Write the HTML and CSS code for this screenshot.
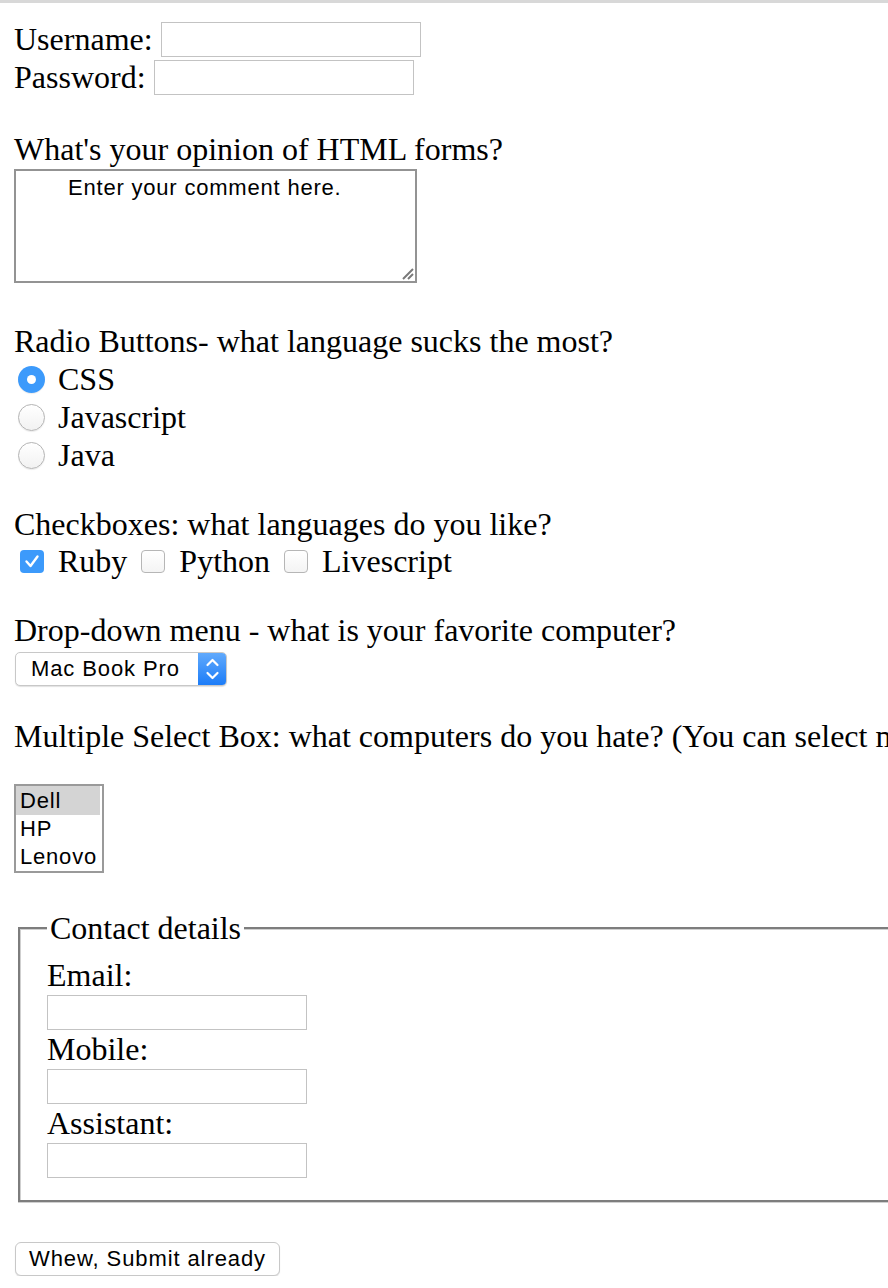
FILE: index.html
```html
<!DOCTYPE html>
<html lang="en">
<head>
<meta charset="utf-8">
<title>HTML forms</title>
<link rel="stylesheet" href="styles.css">
</head>
<body>
<div class="topbar"></div>
<form class="form">
  <div class="row row-user"><label class="lbl">Username:</label><input class="text" type="text"></div>
  <div class="row"><label class="lbl">Password:</label><input class="text" type="password"></div>

  <p class="q q-opinion">What's your opinion of HTML forms?</p>
  <div class="comment">
    <span class="comment-text">Enter your comment here.</span>
    <svg class="grip" width="14" height="14" viewBox="0 0 14 14"><path d="M13 3 L3 13 M13 8 L8 13" stroke="#7a7a7a" stroke-width="2" fill="none"/></svg>
  </div>

  <p class="q q-radio">Radio Buttons- what language sucks the most?</p>
  <div class="row opt"><span class="radio on"></span><span>CSS</span></div>
  <div class="row opt"><span class="radio"></span><span>Javascript</span></div>
  <div class="row opt"><span class="radio"></span><span>Java</span></div>

  <p class="q q-check">Checkboxes: what languages do you like?</p>
  <div class="row checks">
    <span class="cb on"><svg width="24" height="23" viewBox="0 0 24 23"><path d="M6.5 11.5 L10.5 16 L17.5 6.5" stroke="#fff" stroke-width="2.4" fill="none" stroke-linecap="round" stroke-linejoin="round"/></svg></span>
    <span class="cb-label">Ruby</span>
    <span class="cb"></span>
    <span class="cb-label">Python</span>
    <span class="cb"></span>
    <span class="cb-label">Livescript</span>
  </div>

  <p class="q q-drop">Drop-down menu - what is your favorite computer?</p>
  <div class="select">
    <span class="select-text">Mac Book Pro</span>
    <span class="select-arrow"><svg width="29" height="32" viewBox="0 0 29 32"><path d="M9.5 12 L14.5 7 L19.5 12 M9.5 20 L14.5 25 L19.5 20" stroke="#fff" stroke-width="2.2" fill="none" stroke-linecap="round" stroke-linejoin="round"/></svg></span>
  </div>

  <p class="q q-multi">Multiple Select Box: what computers do you hate? (You can select more than one)</p>
  <div class="listbox">
    <div class="item sel">Dell</div>
    <div class="item">HP</div>
    <div class="item">Lenovo</div>
  </div>

  <fieldset class="contact">
    <legend class="legend">Contact details</legend>
    <label class="flabel">Email:</label>
    <input class="text ftext" type="text">
    <label class="flabel">Mobile:</label>
    <input class="text ftext" type="text">
    <label class="flabel">Assistant:</label>
    <input class="text ftext" type="text">
  </fieldset>

  <button class="submit" type="button">Whew, Submit already</button>
</form>
</body>
</html>
```
FILE: styles.css
```css
html, body {
  margin: 0;
  padding: 0;
  background: #fff;
}
body {
  overflow-x: hidden;
  font-family: "Liberation Serif", "Times New Roman", serif;
  font-size: 32px;
  line-height: 38px;
  color: #000;
}
.topbar {
  height: 3px;
  background: #d8d8d8;
}
.form {
  padding-left: 14px;
  display: flex;
  flex-direction: column;
  align-items: flex-start;
}
.row {
  display: flex;
  align-items: center;
  height: 38px;
  gap: 8px;
  white-space: nowrap;
}
.row-user { margin-top: 17px; }
.text {
  box-sizing: border-box;
  width: 260px;
  height: 35px;
  border: 1px solid #c3c3c3;
  padding: 0 4px;
  margin: 0;
  background: #fff;
  font: 20px "Liberation Sans", Arial, sans-serif;
  outline: none;
}
.q {
  margin: 0;
  height: 38px;
  white-space: nowrap;
}
.q-opinion { margin-top: 34px; }
.q-radio { margin-top: 39px; }
.q-check { margin-top: 31px; }
.q-drop { margin-top: 32px; }
.q-multi { margin-top: 31px; }

.comment {
  position: relative;
  box-sizing: border-box;
  margin-top: 1px;
  width: 403px;
  height: 114px;
  border: 2px solid #939393;
  padding: 5px 0 0 52px;
  font: 22px/24px "Liberation Sans", Arial, sans-serif;
  letter-spacing: 0.8px;
  background: #fff;
}
.grip {
  position: absolute;
  right: 1px;
  bottom: 1px;
}

.opt { gap: 13px; }
.radio {
  box-sizing: border-box;
  width: 27px;
  height: 27px;
  margin-left: 4px;
  border-radius: 50%;
  border: 1px solid #b4b4b4;
  background: linear-gradient(#ffffff, #f2f2f2);
  box-shadow: 0 1px 1px rgba(0,0,0,0.08);
  display: flex;
  align-items: center;
  justify-content: center;
}
.radio.on {
  border: none;
  background: #3c9afb;
}
.radio.on::after {
  content: "";
  width: 9px;
  height: 9px;
  border-radius: 50%;
  background: #fff;
}

.checks {
  height: 36px;
  gap: 0;
}
.cb {
  box-sizing: border-box;
  width: 24px;
  height: 23px;
  border: 1px solid #b6b6b6;
  border-radius: 4px;
  background: linear-gradient(#ffffff, #f4f4f4);
  margin-left: 14px;
  margin-right: 14px;
  display: flex;
}
.cb:first-child { margin-left: 6px; }
.cb.on {
  border: none;
  background: #3c9afb;
}

.select {
  box-sizing: border-box;
  margin-top: 3px;
  margin-left: 1px;
  width: 212px;
  height: 34px;
  border: 1px solid #c8c8c8;
  border-radius: 5px;
  box-shadow: 0 1px 1px rgba(0,0,0,0.12);
  background: #fff;
  display: flex;
  align-items: center;
  justify-content: space-between;
  overflow: hidden;
  font: 22px "Liberation Sans", Arial, sans-serif;
  letter-spacing: 0.9px;
}
.select-text {
  padding-left: 15px;
}
.select-arrow {
  width: 29px;
  height: 34px;
  margin-right: -1px;
  background: linear-gradient(#63abfc, #1a7bf8);
  display: flex;
  align-items: center;
  justify-content: center;
}

.listbox {
  box-sizing: border-box;
  margin-top: 29px;
  width: 90px;
  height: 89px;
  border: 2px solid #9a9a9a;
  background: #fff;
  font: 22px "Liberation Sans", Arial, sans-serif;
  letter-spacing: 0.8px;
  padding-right: 2px;
}
.item {
  height: 28px;
  line-height: 28px;
  padding-left: 4px;
}
.item.sel {
  background: #d4d4d4;
  height: 29px;
  line-height: 30px;
}

.contact {
  box-sizing: border-box;
  margin: 36px 0 0 4px;
  width: 1000px;
  border: 2px solid #7d7d7d;
  box-shadow: inset 1px 1px 0 #cfcfcf, 0 1px 0 #cfcfcf;
  padding: 9px 0 22px 27px;
  min-inline-size: 0;
  display: flex;
  flex-direction: column;
  align-items: flex-start;
}
.legend {
  padding: 0 3px;
  height: 38px;
  line-height: 38px;
  background: #fff;
}
.flabel {
  height: 38px;
  line-height: 38px;
}
.ftext {
  margin-top: 1px;
}

.submit {
  margin: 40px 0 0 1px;
  box-sizing: border-box;
  width: 265px;
  height: 34px;
  border: 1px solid #c8c8c8;
  border-radius: 6px;
  background: #fff;
  box-shadow: 0 1px 1px rgba(0,0,0,0.12);
  font: 22px "Liberation Sans", Arial, sans-serif;
  letter-spacing: 0.9px;
  color: #000;
  padding: 0;
}
```
